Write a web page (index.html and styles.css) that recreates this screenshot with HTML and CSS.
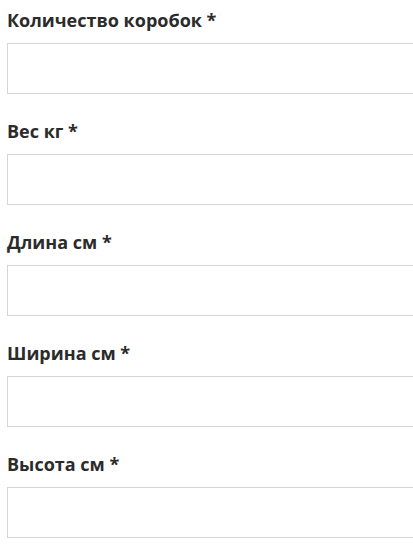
FILE: index.html
```html
<!DOCTYPE html>
<html lang="ru">
<head>
<meta charset="utf-8">
<link rel="stylesheet" href="styles.css">
</head>
<body>
<form class="form">
  <div class="field">
    <label class="field-label" for="f1">Количество коробок *</label>
    <input class="field-input" id="f1" type="text">
  </div>
  <div class="field">
    <label class="field-label" for="f2">Вес кг *</label>
    <input class="field-input" id="f2" type="text">
  </div>
  <div class="field">
    <label class="field-label" for="f3">Длина см *</label>
    <input class="field-input" id="f3" type="text">
  </div>
  <div class="field">
    <label class="field-label" for="f4">Ширина см *</label>
    <input class="field-input" id="f4" type="text">
  </div>
  <div class="field">
    <label class="field-label" for="f5">Высота см *</label>
    <input class="field-input" id="f5" type="text">
  </div>
</form>
</body>
</html>
```
FILE: styles.css
```css
html {
  overflow: hidden;
}
body {
  margin: 0;
  background: #ffffff;
  font-family: "Open Sans", "Noto Sans", sans-serif;
  color: #2b2b2b;
}
.form {
  display: flex;
  flex-direction: column;
  gap: 24px;
  padding: 7px 0 0 7px;
}
.field {
  display: flex;
  flex-direction: column;
  gap: 9px;
}
.field-label {
  font-size: 18px;
  font-weight: 700;
  line-height: 27px;
}
.field-input {
  box-sizing: border-box;
  width: 420px;
  height: 51px;
  margin: 0;
  border: 1px solid #d5d3dc;
  border-radius: 0;
  background: #ffffff;
  font: inherit;
  padding: 0 12px;
  outline: none;
}
```
